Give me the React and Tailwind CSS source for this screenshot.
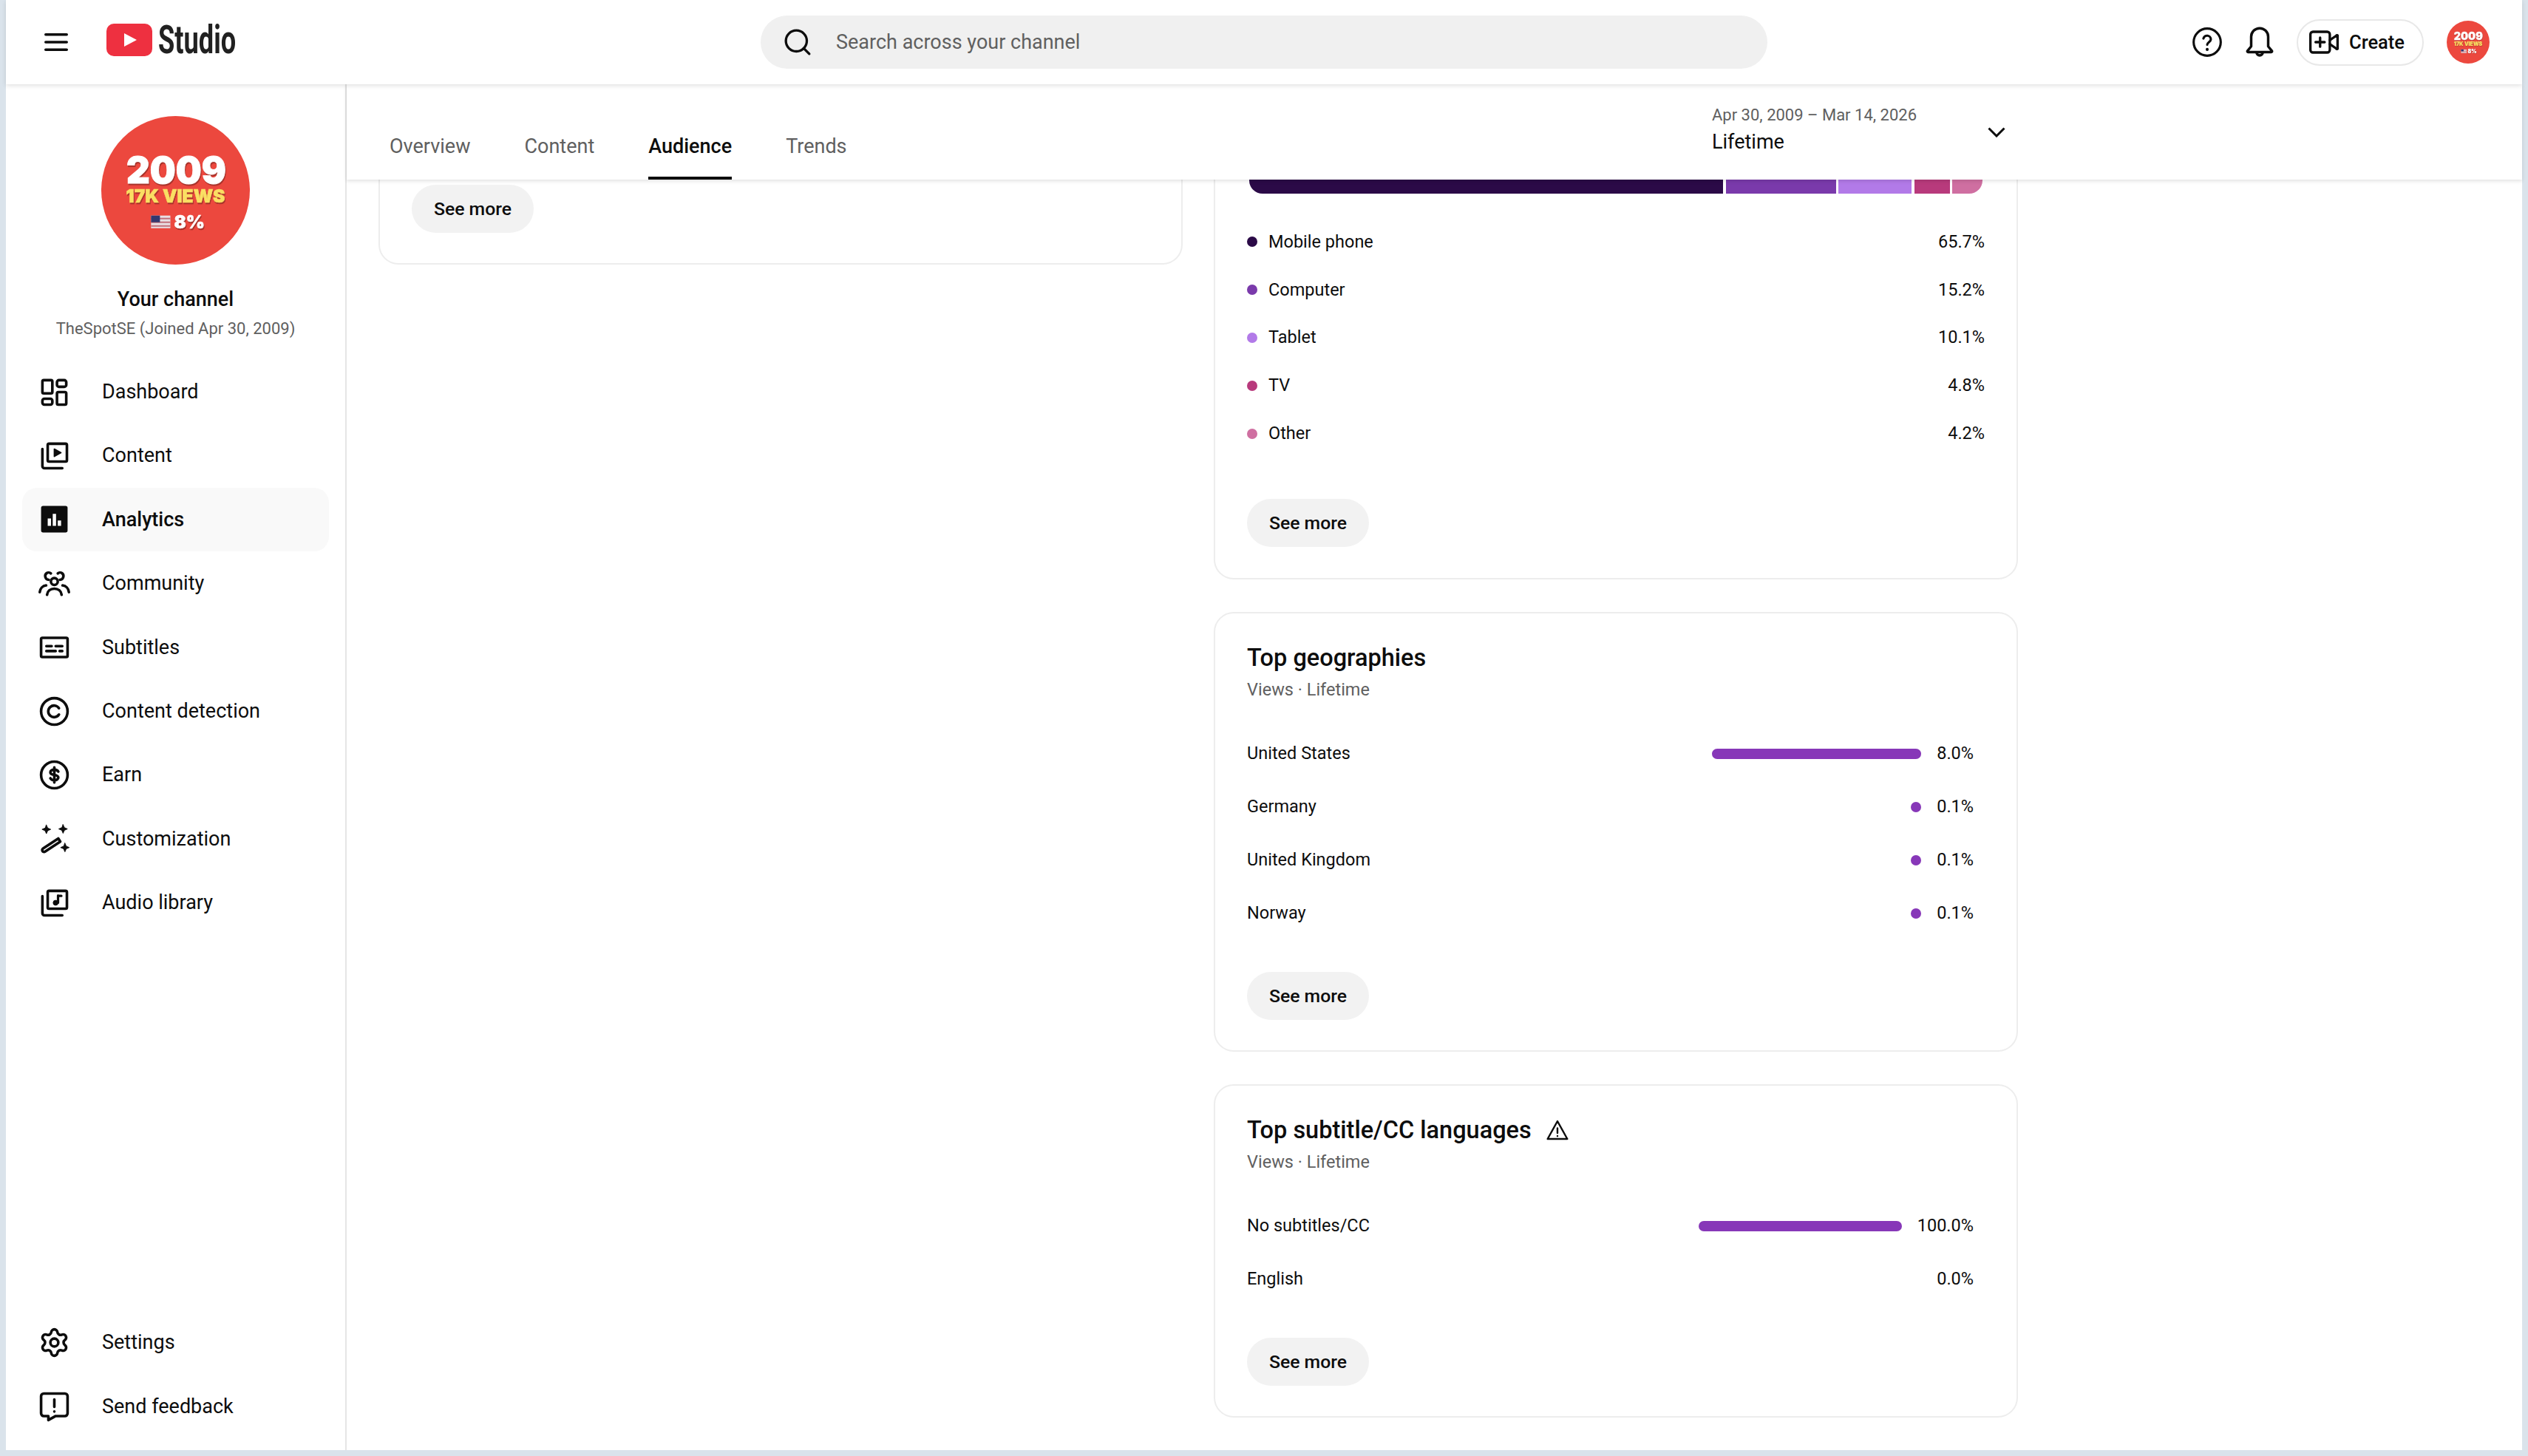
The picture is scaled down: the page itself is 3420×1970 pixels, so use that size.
import { Settings } from 'lucide-react';

const font = { fontFamily: 'Roboto, sans-serif' };

const Icon = ({ children, className = 'w-[43px] h-[43px]', strokeWidth = 2 }) => (
  <svg viewBox="0 0 24 24" fill="none" stroke="#0d0d0d" strokeWidth={strokeWidth} strokeLinecap="round" strokeLinejoin="round" className={`shrink-0 ${className}`}>
    {children}
  </svg>
);

const ChannelAvatar = ({ className }) => (
  <svg viewBox="0 0 200 200" className={className}>
    <circle cx="100" cy="100" r="100" fill="#ec483e" />
    <g fontFamily="Inter, sans-serif" fontWeight="900" textAnchor="middle">
      <text x="101" y="91" fontSize="49" fill="#ffffff" stroke="#ffffff" strokeWidth="1" className="drop-shadow-[1px_2px_0_#a8332b]">2009</text>
      <text x="100" y="116" fontSize="24.5" fill="#fadf63" stroke="#fadf63" strokeWidth="0.6" className="drop-shadow-[1px_2px_0_#a8332b]">17K VIEWS</text>
      <text x="98" y="151" fontSize="24" fill="#ffffff" stroke="#ffffff" strokeWidth="0.5" textAnchor="start" className="drop-shadow-[1px_2px_0_#a8332b]">8%</text>
    </g>
    <rect x="67" y="134" width="26" height="17" fill="#e9dfe3" />
    <rect x="67" y="137" width="26" height="2" fill="#c2707a" />
    <rect x="67" y="142" width="26" height="2" fill="#c2707a" />
    <rect x="67" y="147" width="26" height="2" fill="#c2707a" />
    <rect x="67" y="134" width="12" height="9" fill="#34386f" />
  </svg>
);

const icons = {
  dashboard: (
    <>
      <rect x="3" y="3" width="7.5" height="10" rx="1" />
      <rect x="14" y="3" width="7" height="5" rx="1.5" />
      <rect x="3" y="17" width="7.5" height="4.5" rx="1.5" />
      <rect x="14" y="12" width="7" height="9.5" rx="1" />
    </>
  ),
  content: (
    <>
      <rect x="7" y="3" width="14.5" height="13.5" rx="1" />
      <path d="M3 7v13a1.5 1.5 0 0 0 1.5 1.5H18" />
      <path d="M12 7l5 2.8-5 2.8z" fill="#0d0d0d" strokeWidth="1" />
    </>
  ),
  analytics: (
    <>
      <rect x="2" y="2" width="20" height="20" rx="1.5" fill="#0d0d0d" stroke="none" />
      <path d="M7 11.5h2.5V17H7zM10.8 8h2.5v9h-2.5zM14.6 13h2.5v4h-2.5z" fill="#fff" stroke="none" />
    </>
  ),
  community: (
    <>
      <circle cx="12" cy="10.5" r="2.6" />
      <path d="M6.5 20.5c.3-2.8 2.6-4.6 5.5-4.6s5.2 1.8 5.5 4.6" />
      <path d="M7.8 9.2a2.8 2.8 0 0 1-1.6-5c.9-.7 2.3-.6 3.2.2" />
      <path d="M16.2 9.2a2.8 2.8 0 0 0 1.6-5c-.9-.7-2.3-.6-3.2.2" />
      <path d="M1 18.5c.3-2.8 2.2-4.8 4.8-5.1" />
      <path d="M23 18.5c-.3-2.8-2.2-4.8-4.8-5.1" />
    </>
  ),
  subtitles: (
    <>
      <rect x="2" y="5" width="20" height="14.5" rx="1" />
      <path d="M6 11.3h4M13 11.3h5M6 15h7M16 15h2" />
    </>
  ),
  detection: (
    <>
      <circle cx="12" cy="12" r="10" />
      <path d="M15.5 9.6a4.4 4.4 0 1 0 0 4.8" />
    </>
  ),
  earn: (
    <>
      <circle cx="12" cy="12" r="10" />
      <path d="M15 9.5C14.5 8.5 13.4 8 12 8c-1.7 0-3 .8-3 2s1.3 1.700 3 2 3 .8 3 2-1.3 2-3 2c-1.4 0-2.5-.5-3-1.500M12 6.300v11.400" />
    </>
  ),
  customization: (
    <>
      <path d="M3.500 19.500l11.500-7.500 1.500 2.400-11.500 7.500a1.400 1.400 0 0 1-1.500-2.400z" />
      <path d="M6 1.800l1 2.300 2.300 1-2.300 1-1 2.300-1-2.300-2.300-1 2.300-1zM18.600 1.500l1 2.300 2.300 1-2.300 1-1 2.300-1-2.300-2.300-1 2.300-1zM20 15.500l1 2.300 2.300 1-2.300 1-1 2.300-1-2.300-2.300-1 2.300-1z" fill="#0d0d0d" strokeWidth="0.5" />
    </>
  ),
  audio: (
    <>
      <rect x="7" y="3" width="14.5" height="13.5" rx="1" />
      <path d="M3 7v13a1.500 1.500 0 0 0 1.500 1.500H18" />
      <path d="M14.800 6.500v5.500M14.800 6.800h2.500" strokeWidth="1.800" />
      <circle cx="13" cy="12" r="1.900" fill="#0d0d0d" strokeWidth="0.5" />
    </>
  ),
  feedback: (
    <>
      <path d="M4 2.500h16a2 2 0 0 1 2 2v13a2 2 0 0 1-2 2h-7l-5.500 3v-3H4a2 2 0 0 1-2-2v-13a2 2 0 0 1 2-2z" />
      <path d="M12 7v5.500M12 16v.1" />
    </>
  ),
};

const navTop = [
  ['Dashboard', 'dashboard'],
  ['Content', 'content'],
  ['Analytics', 'analytics'],
  ['Community', 'community'],
  ['Subtitles', 'subtitles'],
  ['Content detection', 'detection'],
  ['Earn', 'earn'],
  ['Customization', 'customization'],
  ['Audio library', 'audio'],
];

const NavItem = ({ label, icon, active }) => (
  <div className={`h-[86.4px] mx-[22px] pl-[22px] flex items-center gap-[43px] rounded-[20px] text-[27px] text-[#0d0d0d] ${active ? 'bg-[#f9f9f9] font-medium' : ''}`}>
    {icon}
    <span>{label}</span>
  </div>
);

const Sidebar = () => (
  <aside className="w-[461px] shrink-0 border-r-2 border-[#e5e5e5] flex flex-col pb-4">
    <div className="flex flex-col items-center pt-[43px]">
      <ChannelAvatar className="w-[201px] h-[201px]" />
      <div className="mt-[27px] text-[27px] leading-[40px] font-medium text-[#0d0d0d]">Your channel</div>
      <div className="mt-1 text-[22px] leading-[32px] text-[#606060]">TheSpotSE (Joined Apr 30, 2009)</div>
    </div>
    <nav className="mt-[26px]">
      {navTop.map(([label, key]) => (
        <NavItem key={key} label={label} active={key === 'analytics'} icon={<Icon>{icons[key]}</Icon>} />
      ))}
    </nav>
    <div className="mt-auto">
      <NavItem label="Settings" icon={<Settings size={43} color="#0d0d0d" strokeWidth={2} className="shrink-0" />} />
      <NavItem label="Send feedback" icon={<Icon>{icons.feedback}</Icon>} />
    </div>
  </aside>
);

const Header = () => (
  <header className="h-[114px] shrink-0 bg-white flex items-center relative z-20 shadow-[0_2px_6px_rgba(0,0,0,0.12)]">
    <div className="w-[1021px] shrink-0 flex items-center pl-[52px]">
      <svg viewBox="0 0 32 24" className="w-[32px] h-[24px] shrink-0 mr-[52px]" fill="#0d0d0d">
        <rect x="0" y="0" width="32" height="3.500" rx="1.750" />
        <rect x="0" y="10.250" width="32" height="3.500" rx="1.750" />
        <rect x="0" y="20.500" width="32" height="3.500" rx="1.750" />
      </svg>
      <div className="flex items-center mb-[6px]">
        <svg viewBox="0 0 62 44" className="w-[62px] h-[44px] shrink-0">
          <rect x="0" y="0" width="62" height="44" rx="10" fill="#ee3040" />
          <path d="M24 13L41 22 24 31z" fill="#fff" />
        </svg>
        <span className="ml-2 text-[54px] leading-none font-bold text-[#212121] scale-x-[0.67] origin-left inline-block">Studio</span>
      </div>
    </div>
    <div className="w-[1362px] shrink-0 h-[72px] rounded-full bg-[#f0f0f0] flex items-center pl-[30px] gap-[32px]">
      <Icon className="w-[40px] h-[40px]" strokeWidth={2}>
        <circle cx="11" cy="11" r="8.500" />
        <path d="M17 17l4.500 4.500" />
      </Icon>
      <span className="text-[27px] text-[#606060]">Search across your channel</span>
    </div>
    <div className="flex-1 flex items-center justify-end pr-[44px]">
      <Icon className="w-[44px] h-[44px]" strokeWidth={1.700}>
        <circle cx="12" cy="12" r="10" />
        <path d="M9.200 9.300a2.800 2.800 0 0 1 5.500.6c0 1.800-2.700 2.300-2.700 4" />
        <path d="M12 17.300v.1" strokeWidth="2.200" />
      </Icon>
      <Icon className="w-[46px] h-[46px] ml-[26px]" strokeWidth={1.800}>
        <path d="M12 2.200a6 6 0 0 0-6 6v6.800l-2.600 3.200a.5.5 0 0 0 .4.800h16.400a.5.5 0 0 0 .4-.8L18 15V8.200a6 6 0 0 0-6-6z" />
        <path d="M9.800 19.200a2.200 2.200 0 0 0 4.400 0" />
      </Icon>
      <div className="ml-[27px] h-[63px] w-[172px] rounded-full border-2 border-[#e8e8e8] flex items-center pl-[14px] gap-[13px]">
        <Icon className="w-[42px] h-[42px]" strokeWidth={1.900}>
          <rect x="1.500" y="4" width="15" height="16" rx="2" />
          <path d="M16.500 10.500l5-3.500a.5.5 0 0 1 1 .3v9.400a.5.5 0 0 1-1 .3l-5-3.500" />
          <path d="M9 8.500v7M5.500 12h7" />
        </Icon>
        <span className="text-[25.5px] font-medium text-[#0d0d0d]">Create</span>
      </div>
      <ChannelAvatar className="w-[58px] h-[58px] ml-[31px]" />
    </div>
  </header>
);

const tabs = ['Overview', 'Content', 'Audience', 'Trends'];

const TabBar = () => (
  <div className="h-[129px] shrink-0 bg-white relative z-10 shadow-[0_2px_5px_rgba(0,0,0,0.12)] flex items-end pl-[58px] pr-[699px]">
    <div className="flex gap-[73px]">
      {tabs.map((t) => (
        <div key={t} className={`h-[85px] flex items-start pt-[20px] text-[27px] leading-[40px] border-b-4 ${t === 'Audience' ? 'text-[#0d0d0d] font-medium border-[#0d0d0d]' : 'text-[#606060] border-transparent'}`}>
          {t}
        </div>
      ))}
    </div>
    <div className="ml-auto w-[373px] self-start pt-[24px]">
      <div className="text-[22px] leading-[36px] text-[#606060]">Apr 30, 2009 – Mar 14, 2026</div>
      <div className="text-[27px] leading-[36px] text-[#0d0d0d]">Lifetime</div>
    </div>
    <svg viewBox="0 0 24 14" className="w-[24px] h-[14px] self-start mt-[58px]" fill="none" stroke="#0d0d0d" strokeWidth="3">
      <path d="M1.500 1.500L12 12 22.500 1.500" />
    </svg>
  </div>
);

const SeeMore = ({ className = '' }) => (
  <div className={`w-[165px] h-[65px] rounded-full bg-[#f2f2f2] flex items-center justify-center text-[24.8px] font-medium text-[#0d0d0d] ${className}`}>
    See more
  </div>
);

const Card = ({ children, className = '' }) => (
  <div className={`w-[1088px] shrink-0 bg-white border-2 border-[#ededed] rounded-[27px] pl-[43px] pr-[43px] ${className}`}>
    {children}
  </div>
);

const devices = [
  ['Mobile phone', '65.7%', 'bg-[#2b0a47]', 'w-[642px]'],
  ['Computer', '15.2%', 'bg-[#7a3aab]', 'w-[149px]'],
  ['Tablet', '10.1%', 'bg-[#b27ae8]', 'w-[99px]'],
  ['TV', '4.8%', 'bg-[#b83a7c]', 'w-[48px]'],
  ['Other', '4.2%', 'bg-[#cf6fa1]', 'w-[41px]'],
];

const CardTitle = ({ title, children }) => (
  <>
    <div className="pt-[38px] flex items-center text-[32.5px] leading-[44px] font-medium text-[#0d0d0d]">
      {title}
      {children}
    </div>
    <div className="mt-[3px] text-[23.5px] leading-[36px] text-[#606060]">Views · Lifetime</div>
  </>
);

const BarRow = ({ label, value, barClass }) => (
  <div className="h-[72px] flex items-center text-[23.5px] text-[#0d0d0d] pr-[15px]">
    <span className="flex-1">{label}</span>
    {barClass && <div className={`h-[14px] rounded-full bg-[#8737b8] ${barClass}`} />}
    <span className="ml-[21px]">{value}</span>
  </div>
);

const Audience = () => (
  <main className="flex-1 min-w-0 flex flex-col relative">
    <TabBar />
    <div className="flex-1 min-h-0 overflow-hidden">
      <div className="-mt-[40px] pl-[43px] flex items-start gap-[42px]">
        <Card className="pt-[45px] pb-[41px]">
          <SeeMore />
        </Card>
        <div className="flex flex-col gap-[44px]">
          <Card className="pt-[21px] pb-[42px]">
            <div className="ml-[3px] w-[992px] h-[36px] rounded-[18px] overflow-hidden flex gap-[3.5px]">
              {devices.map((d) => (
                <div key={d[0]} className={`h-full ${d[2]} ${d[3]}`} />
              ))}
            </div>
            <div className="mt-[33px]">
              {devices.map((d) => (
                <div key={d[0]} className="h-[64.8px] flex items-center text-[23.5px] text-[#0d0d0d]">
                  <span className={`w-[14px] h-[14px] rounded-full ${d[2]}`} />
                  <span className="ml-[15px] flex-1">{d[0]}</span>
                  <span>{d[1]}</span>
                </div>
              ))}
            </div>
            <SeeMore className="mt-[56px]" />
          </Card>
          <Card className="pb-[41px]">
            <CardTitle title="Top geographies" />
            <div className="mt-[33px]">
              <BarRow label="United States" value="8.0%" barClass="w-[283px]" />
              <BarRow label="Germany" value="0.1%" barClass="w-[14px]" />
              <BarRow label="United Kingdom" value="0.1%" barClass="w-[14px]" />
              <BarRow label="Norway" value="0.1%" barClass="w-[14px]" />
            </div>
            <SeeMore className="mt-[43px]" />
          </Card>
          <Card className="pb-[41px]">
            <CardTitle title="Top subtitle/CC languages">
              <Icon className="w-[32px] h-[32px] ml-[19px]" strokeWidth={1.800}>
                <path d="M12 3L22 21H2z" />
                <path d="M12 10v5M12 18v.1" />
              </Icon>
            </CardTitle>
            <div className="mt-[33px]">
              <BarRow label="No subtitles/CC" value="100.0%" barClass="w-[275px]" />
              <BarRow label="English" value="0.0%" />
            </div>
            <SeeMore className="mt-[43px]" />
          </Card>
        </div>
      </div>
    </div>
  </main>
);

export default function App() {
  return (
    <div style={font} className="w-[3420px] h-[1970px] bg-[#dae3eb] px-2 pb-2 flex flex-col overflow-hidden">
      <div className="flex-1 min-h-0 bg-white flex flex-col">
        <Header />
        <div className="flex-1 min-h-0 flex">
          <Sidebar />
          <Audience />
        </div>
      </div>
    </div>
  );
}
